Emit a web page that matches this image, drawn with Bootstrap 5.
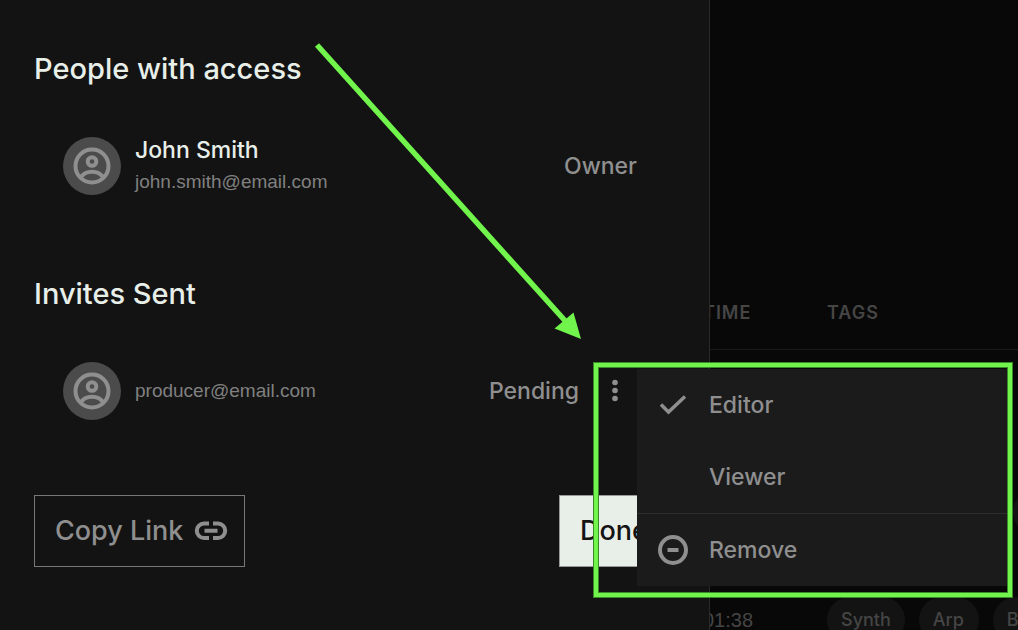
<!DOCTYPE html>
<html lang="en">
<head>
<meta charset="utf-8">
<meta name="viewport" content="width=device-width, initial-scale=1">
<title>Share project</title>
<link href="https://cdn.jsdelivr.net/npm/bootstrap@5.3.0/dist/css/bootstrap.min.css" rel="stylesheet">
<style>
  :root { --ink: #e8efe9; --muted: #8f8f8f; --accent: #71f44b; --accent-edge: #3c8a27; }
  body { background: #080808; color: var(--ink); font-family: Inter, "Liberation Sans", sans-serif; font-weight: 500; overflow: hidden; }
  .screen { display: grid; grid-template-columns: 710fr 308fr; }
  .share-panel { background: #131313; border-right: 1px solid #2a2a2a; padding: 49px 34px 0; z-index: 2; }
  .share-panel h2 { font-size: 29px; line-height: 40px; font-weight: 500; margin: 0 0 48px; }
  .person { height: 58px; margin: 0 38px 79px 29px; }
  .person.last-person { margin-bottom: 75px; }
  .person-text { margin-left: 14px; }
  .avatar { width: 58px; height: 58px; background: #4b4b4b; flex: none; }
  .person-name { font-size: 23px; line-height: 32px; }
  .person-mail { font-family: "Liberation Sans", Arial, sans-serif; font-size: 19px; line-height: 32px; font-weight: 400; color: #808080; }
  .person-role { font-size: 23px; line-height: 32px; color: var(--muted); }
  .menu-anchor { width: 44px; height: 44px; margin-left: 14px; }
  .dots { width: 44px; height: 44px; color: var(--muted); }
  .dropdown-menu.role-menu { left: 100%; top: 0; width: 371px; padding: 0; margin: 0; border: 0; border-radius: 0; background: #1b1b1b; }
  .role-menu .dropdown-item { height: 72px; padding: 0 20px; gap: 20px; font-size: 23px; font-weight: 500; color: var(--muted); }
  .role-menu .dropdown-item:hover { background: #232323; }
  .role-menu .dropdown-divider { margin: 0; border-top: 1px solid #2e2e2e; opacity: 1; }
  .highlight { position: absolute; left: 1px; top: -6px; width: 418px; height: 234px; border: 4px solid var(--accent); box-shadow: 0 0 0 1px var(--accent-edge), inset 0 0 0 1px var(--accent-edge); z-index: 1100; pointer-events: none; }
  .arrow { position: absolute; left: 310px; top: 38px; z-index: 5; pointer-events: none; }
  .btn.panel-btn { height: 72px; border-radius: 0; font-size: 27px; font-weight: 500; padding: 0 16px 0 20px; border: 1px solid #777; color: var(--muted); gap: 11px; }
  .btn.panel-btn.done { min-width: 116px; background: var(--ink); color: #131313; border-color: #999; }
  .library { overflow: hidden; padding-top: 276px; height: 100vh; color: #454545; }
  .tracks { width: 440px; margin-left: -7px; border-collapse: separate; border-spacing: 0; }
  .tracks th { height: 74px; font-size: 18px; font-weight: 600; letter-spacing: 1px; border-bottom: 1px solid #191919; padding: 0; }
  .tracks td { height: 108px; padding: 0; font-family: "Liberation Sans", Arial, sans-serif; font-size: 20px; font-weight: 400; }
  .tracks .time-col { width: 124px; }
  .tag-list { gap: 14px; }
  .tag-pill { background: #131313; border-radius: 23px; min-width: 60px; height: 46px; line-height: 46px; padding: 0 14px; font-family: Inter, "Liberation Sans", sans-serif; font-size: 18px; font-weight: 500; }
  .tag-offset { margin-left: 186px; }
</style>
</head>
<body>
<div class="screen vh-100 position-relative">
  <section class="share-panel" aria-label="Sharing">
    <h2>People with access</h2>
    <div class="person d-flex align-items-center">
      <div class="avatar rounded-circle d-flex align-items-center justify-content-center">
        <svg width="38" height="38" viewBox="0 0 38 38" fill="none" stroke="#8f8f8f" stroke-width="4" aria-hidden="true"><circle cx="19" cy="19" r="16.5"/><circle cx="19" cy="14.5" r="4.3"/><path d="M8 30c5-7 17-7 22 0"/></svg>
      </div>
      <div class="person-text flex-grow-1">
        <div class="person-name">John Smith</div>
        <div class="person-mail">john.smith@email.com</div>
      </div>
      <div class="person-role">Owner</div>
    </div>
    <h2>Invites Sent</h2>
    <div class="person last-person d-flex align-items-center">
      <div class="avatar rounded-circle d-flex align-items-center justify-content-center">
        <svg width="38" height="38" viewBox="0 0 38 38" fill="none" stroke="#8f8f8f" stroke-width="4" aria-hidden="true"><circle cx="19" cy="19" r="16.5"/><circle cx="19" cy="14.5" r="4.3"/><path d="M8 30c5-7 17-7 22 0"/></svg>
      </div>
      <div class="person-text person-mail flex-grow-1">producer@email.com</div>
      <div class="person-role">Pending</div>
      <div class="menu-anchor position-relative">
        <button class="dots btn p-0 border-0 d-flex align-items-center justify-content-center" type="button" aria-label="Invite options" aria-expanded="true">
          <svg width="8" height="24" viewBox="0 0 8 24" fill="#8f8f8f" aria-hidden="true"><circle cx="4" cy="3.5" r="2.8"/><circle cx="4" cy="11.5" r="2.8"/><circle cx="4" cy="19.5" r="2.8"/></svg>
        </button>
        <div class="dropdown-menu role-menu show">
          <button class="dropdown-item d-flex align-items-center" type="button">
            <svg width="32" height="32" viewBox="0 0 32 32" fill="none" stroke="#8f8f8f" stroke-width="3.5" aria-hidden="true"><path d="M4 15.5l7.5 7.5L28 7.5"/></svg>Editor</button>
          <button class="dropdown-item d-flex align-items-center" type="button">
            <svg width="32" height="32" aria-hidden="true"></svg>Viewer</button>
          <hr class="dropdown-divider">
          <button class="dropdown-item d-flex align-items-center" type="button">
            <svg width="32" height="32" viewBox="0 0 32 32" fill="none" stroke="#8f8f8f" stroke-width="4" aria-hidden="true"><circle cx="16" cy="16" r="13"/><path d="M10.500 16h11"/></svg>Remove</button>
        </div>
        <div class="highlight"></div>
      </div>
    </div>
    <div class="d-flex justify-content-between">
      <button class="btn panel-btn d-flex align-items-center" type="button">Copy Link
        <svg width="34" height="24" viewBox="0 0 34 24" fill="none" stroke="#8f8f8f" stroke-width="4" aria-hidden="true"><path d="M15 4.500h-5a7.200 7.200 0 0 0 0 14.400h5M19 4.500h5a7.200 7.200 0 0 1 0 14.400h-5M10.500 11.700h13"/></svg>
      </button>
      <button class="btn panel-btn done text-start" type="button">Done</button>
    </div>
  </section>
  <section class="library" aria-label="Library">
    <table class="tracks">
      <thead><tr><th class="time-col">TIME</th><th>TAGS</th></tr></thead>
      <tbody>
        <tr><td></td><td></td></tr>
        <tr><td></td><td><div class="tag-list d-flex"><span class="tag-pill tag-offset"></span></div></td></tr>
        <tr><td>01:38</td><td><div class="tag-list d-flex"><span class="tag-pill">Synth</span><span class="tag-pill">Arp</span><span class="tag-pill">Bass</span></div></td></tr>
      </tbody>
    </table>
  </section>
  <svg class="arrow" width="280" height="310" viewBox="310 38 280 310" aria-hidden="true"><path d="M317 45L568 324" stroke="#71f44b" stroke-width="5.500" fill="none"/><path d="M581 339L554.500 328.500L573.500 312.500Z" fill="#71f44b"/></svg>
</div>
<script src="https://cdn.jsdelivr.net/npm/bootstrap@5.3.0/dist/js/bootstrap.bundle.min.js"></script>
</body>
</html>
